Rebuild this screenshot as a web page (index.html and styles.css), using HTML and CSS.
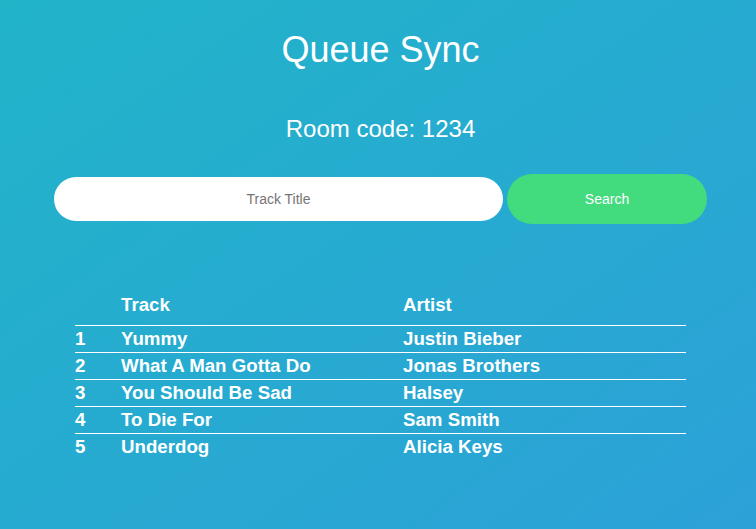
FILE: index.html
```html
<!DOCTYPE html>
<html lang="en">
<head>
<meta charset="utf-8">
<title>Queue Sync</title>
<link rel="stylesheet" href="styles.css">
</head>
<body>
<main class="page">
  <h1 class="title">Queue Sync</h1>
  <p class="room">Room code: 1234</p>
  <form class="search" onsubmit="return false">
    <input class="search-input" type="text" placeholder="Track Title">
    <button class="search-btn" type="submit">Search</button>
  </form>
  <table class="queue">
    <colgroup>
      <col class="c-num">
      <col class="c-track">
      <col class="c-artist">
    </colgroup>
    <thead>
      <tr><th></th><th>Track</th><th>Artist</th></tr>
    </thead>
    <tbody>
      <tr><td>1</td><td>Yummy</td><td>Justin Bieber</td></tr>
      <tr><td>2</td><td>What A Man Gotta Do</td><td>Jonas Brothers</td></tr>
      <tr><td>3</td><td>You Should Be Sad</td><td>Halsey</td></tr>
      <tr><td>4</td><td>To Die For</td><td>Sam Smith</td></tr>
      <tr><td>5</td><td>Underdog</td><td>Alicia Keys</td></tr>
    </tbody>
  </table>
</main>
</body>
</html>
```

FILE: styles.css
```css
html, body {
  margin: 0;
  padding: 0;
  min-height: 100%;
}
body {
  background: linear-gradient(to bottom right, #21b4c9, #2ca1d8);
  min-height: 529px;
  font-family: "Liberation Sans", Arial, sans-serif;
  color: #ffffff;
}
.page {
  padding: 0 0 0 5px;
  overflow: hidden;
}
.title {
  margin: 30px 0 0;
  font-size: 36px;
  line-height: 40px;
  font-weight: normal;
  text-align: center;
}
.room {
  margin: 45px 0 0;
  font-size: 24px;
  line-height: 27px;
  text-align: center;
}
.search {
  margin: 32px auto 0;
  width: 653px;
  display: flex;
  align-items: center;
  gap: 4px;
}
.search-input {
  width: 449px;
  height: 44px;
  box-sizing: border-box;
  border: none;
  border-radius: 22px;
  background: #ffffff;
  text-align: center;
  font-family: "Liberation Sans", Arial, sans-serif;
  font-size: 14px;
  color: #333;
  outline: none;
  padding: 0 10px;
}
.search-input::placeholder {
  color: #757575;
}
.search-btn {
  width: 200px;
  height: 50px;
  border: none;
  border-radius: 25px;
  background: #42db7e;
  color: #ffffff;
  font-family: "Liberation Sans", Arial, sans-serif;
  font-size: 14px;
  padding: 0;
}
.queue {
  margin: 68px auto 0;
  width: 611px;
  border-collapse: collapse;
  table-layout: fixed;
  font-size: 18.7px;
  font-weight: bold;
}
.c-num { width: 46px; }
.c-track { width: 282px; }
.c-artist { width: 283px; }
.queue th,
.queue td {
  padding: 0;
  text-align: left;
  line-height: 26px;
}
.queue th {
  padding-bottom: 7px;
  border-bottom: 1px solid #ffffff;
}
.queue tbody tr:not(:last-child) td {
  border-bottom: 1px solid #ffffff;
}
```
